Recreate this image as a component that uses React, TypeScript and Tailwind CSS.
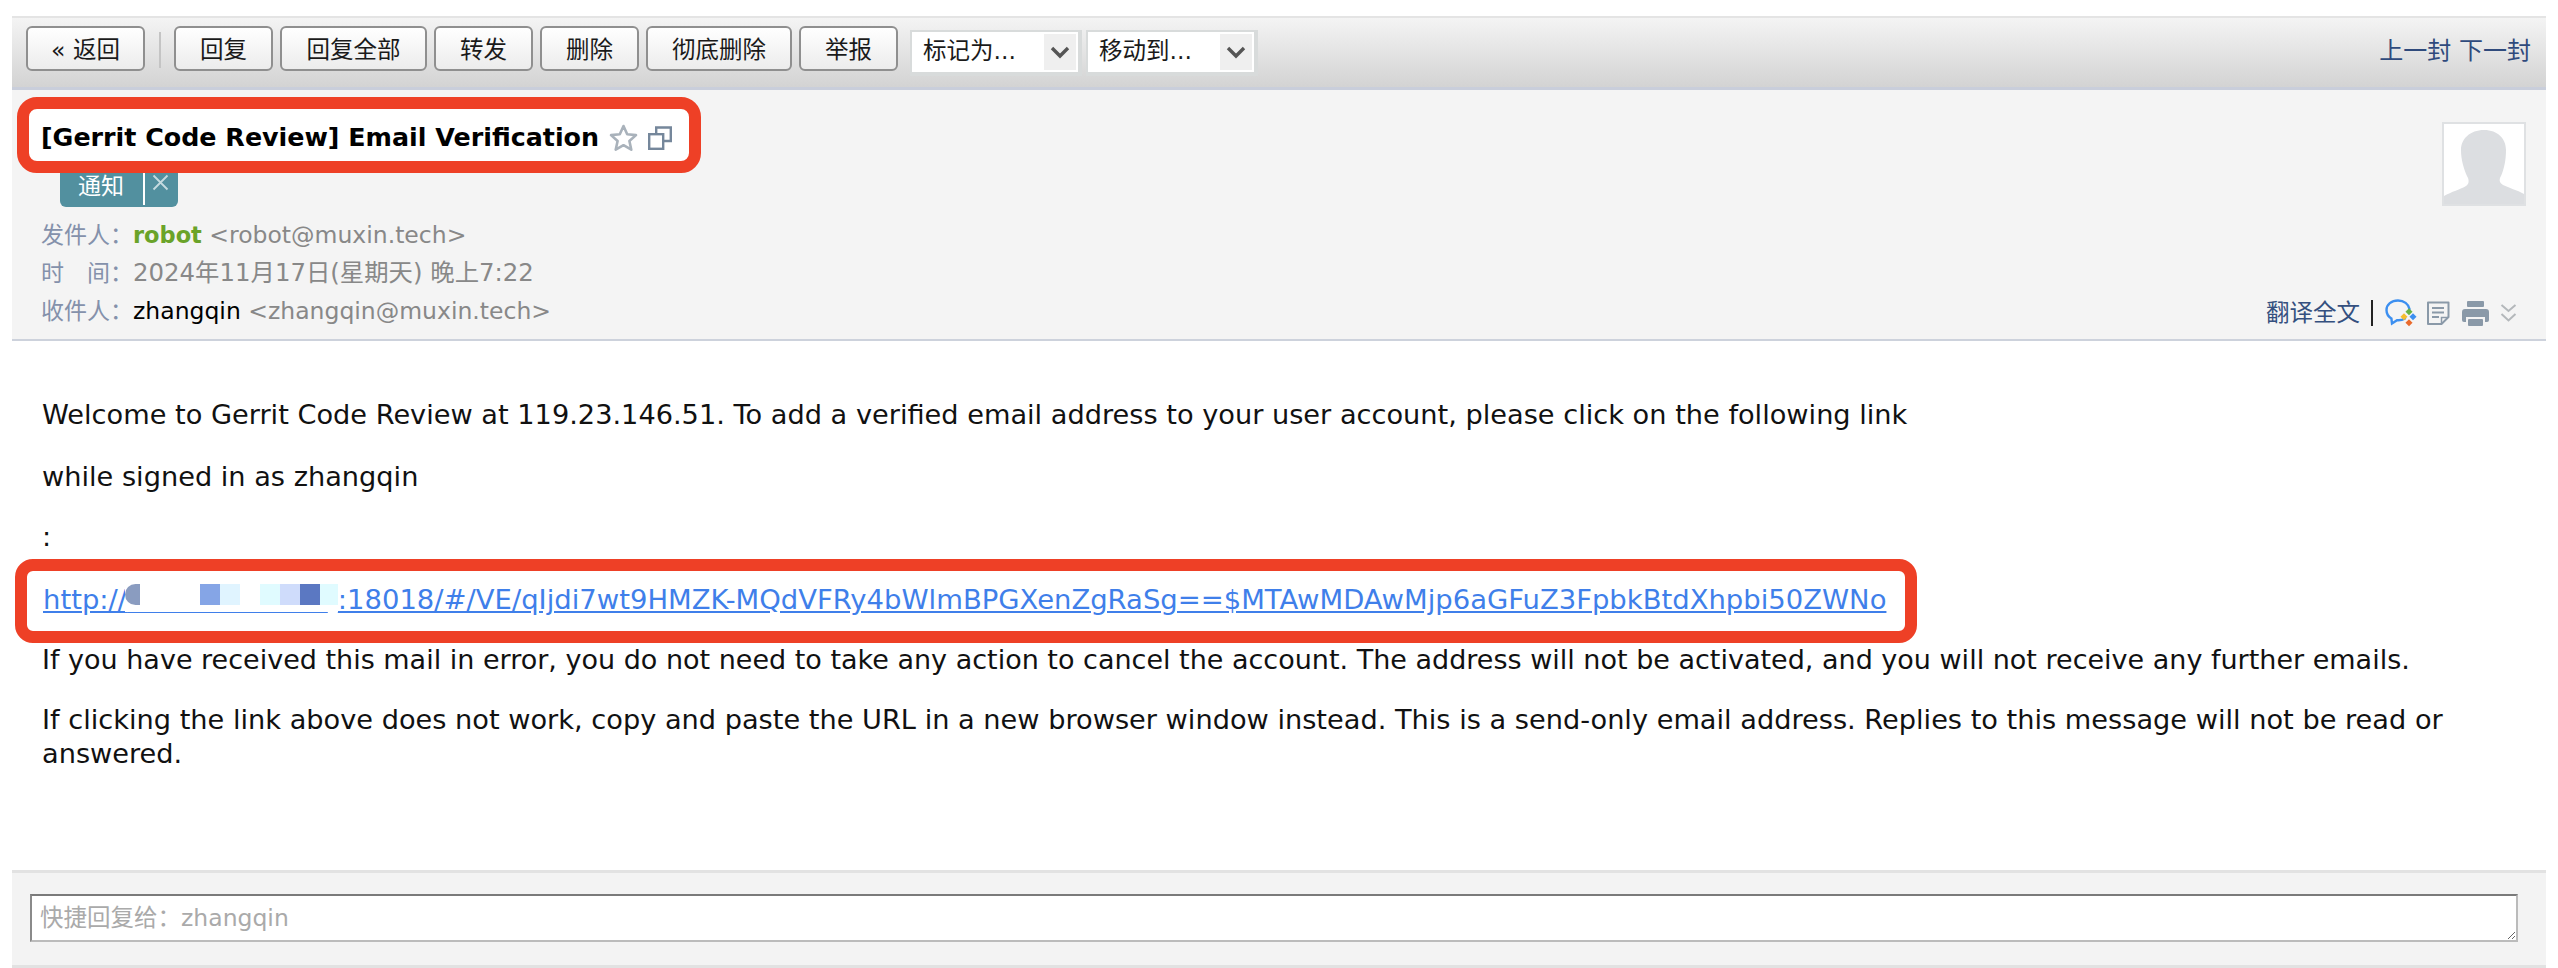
const cjk = "font-['DejaVu_Sans','Noto_Sans_CJK_SC',sans-serif]";

const buttons = [
  { label: "回复", width: "w-[99px]" },
  { label: "回复全部", width: "w-[147px]" },
  { label: "转发", width: "w-[99px]" },
  { label: "删除", width: "w-[99px]" },
  { label: "彻底删除", width: "w-[146px]" },
  { label: "举报", width: "w-[99px]" },
];

function ToolButton({ label, width }: { label: string; width: string }) {
  return (
    <button
      type="button"
      className={`${width} h-[45px] shrink-0 rounded-[6px] border-2 border-[#8f8f8f] bg-gradient-to-b from-white to-[#ececec] pt-[5px] text-[23.500px] text-[#1a1a1a]`}
    >
      {label}
    </button>
  );
}

function SelectBox({ label }: { label: string }) {
  return (
    <div className="flex h-[46px] w-[172px] shrink-0 items-center border-t-2 border-r-4 border-b-4 border-l-2 border-[#d8dbdb] bg-white pr-[2px] pl-[11px]">
      <span className="flex-1 text-[23.500px] text-[#1a1a1a]">{label}</span>
      <span className="flex h-[36px] w-[32px] items-center justify-center bg-[#efefef]">
        <svg width="20" height="14" viewBox="0 0 20 14" fill="none">
          <path d="M2 3l8 8 8-8" stroke="#555" strokeWidth="3.4" />
        </svg>
      </span>
    </div>
  );
}

function StarIcon() {
  return (
    <svg width="29" height="28" viewBox="0 0 29 28" fill="none">
      <path
        d="M14.5 2l3.7 8.2 8.8.9-6.6 5.9 1.9 8.7-7.8-4.5-7.8 4.5 1.9-8.7L2 11.100l8.800-.9z"
        stroke="#a9b2bb"
        strokeWidth="2.600"
        strokeLinejoin="round"
      />
    </svg>
  );
}

function WindowIcon() {
  return (
    <svg width="24" height="24" viewBox="0 0 24 24" fill="none" stroke="#75879b" strokeWidth="2.400">
      <rect x="1.200" y="8.200" width="14" height="14.600" />
      <path d="M8.200 8V1.500h14.600v13.500h-7.500" />
    </svg>
  );
}

function AvatarBox() {
  return (
    <div className="h-[84px] w-[84px] border-2 border-[#dfe1e3] bg-white">
      <svg width="80" height="80" viewBox="0 0 80 80">
        <path
          d="M40 6c14 0 22 9 22 20 0 10-2 20-6 28-1 3 0 5 3 7 6 3 14 5 21 9v10H0V72c7-4 17-7 22-10 3-2 3-5 2-8-4-8-7-18-7-28C17 15 26 6 40 6z"
          fill="#dcdee1"
        />
      </svg>
    </div>
  );
}

function ChatIcon() {
  return (
    <svg width="32" height="28" viewBox="0 0 32 28" fill="none">
      <path
        d="M20 19.500c-2.500 1.500-5 2-8 1.700L7 24.500l-.6-5C3 17.500 1.500 14.500 1.500 11 1.500 5.500 6.500 1.500 13 1.500c6 0 10.500 3.500 11.500 8.500"
        stroke="#3c8ff0"
        strokeWidth="2.400"
        strokeLinecap="round"
      />
      <rect x="22" y="10" width="5" height="5" transform="rotate(45 24 12)" fill="#67b346" />
      <rect x="26" y="15" width="5" height="5" transform="rotate(45 28 17)" fill="#3c8ff0" />
      <rect x="17" y="15" width="5" height="5" transform="rotate(45 19 17)" fill="#f5bd2f" />
      <rect x="22" y="21" width="5" height="5" transform="rotate(45 24 23)" fill="#ea6a2c" />
    </svg>
  );
}

function NoteIcon() {
  return (
    <svg width="24" height="24" viewBox="0 0 24 24" fill="none" stroke="#8a99a8" strokeWidth="2">
      <path d="M2 1.500h20.500V16l-7 7H2z" strokeLinejoin="round" />
      <path d="M6 7h12M6 11.500h12M6 16h7" strokeWidth="1.800" />
      <path d="M22 16.500h-6.500V23" strokeWidth="1.500" />
    </svg>
  );
}

function PrintIcon() {
  return (
    <svg width="27" height="25" viewBox="0 0 27 25" fill="#8a99a8">
      <rect x="5" y="0" width="17" height="6" rx="1" />
      <path d="M3 8h21a3 3 0 013 3v8a2 2 0 01-2 2h-2v-5H4v5H2a2 2 0 01-2-2v-8a3 3 0 013-3z" />
      <rect x="6" y="18" width="15" height="7" rx="1" />
    </svg>
  );
}

function DoubleChevron() {
  return (
    <svg width="17" height="20" viewBox="0 0 17 20" fill="none" stroke="#b4b8bb" strokeWidth="2">
      <path d="M1.500 2l7 6 7-6M1.500 11l7 6.500 7-6.500" />
    </svg>
  );
}

export default function App() {
  return (
    <div className={`flex h-[968px] w-[2558px] flex-col overflow-hidden bg-white pt-4 pr-3 pl-3 ${cjk}`}>
      {/* toolbar */}
      <div className="flex h-[74px] shrink-0 items-start border-t-2 border-b-[3px] border-t-[#e4e4e4] border-b-[#c9cedb] bg-gradient-to-b from-[#f4f4f4] to-[#d3d3d3] pt-2 pl-[14px]">
        <ToolButton label="« 返回" width="w-[119px]" />
        <span className="mt-[6px] mr-[13px] ml-[14px] h-[36px] w-[2px] bg-[#c4c4c4]" />
        <div className="flex gap-[7px]">
          {buttons.map((b) => (
            <ToolButton key={b.label} label={b.label} width={b.width} />
          ))}
        </div>
        <div className="mt-[4px] ml-[12px] flex gap-[4px]">
          <SelectBox label="标记为..." />
          <SelectBox label="移动到..." />
        </div>
        <span className="mt-[7px] mr-[15px] ml-auto text-[24px] text-[#2f4a7c]">上一封 下一封</span>
      </div>

      {/* mail header */}
      <div className="flex h-[251px] shrink-0 justify-between border-b-2 border-[#cdd2dc] bg-[#f4f4f4] pt-[7px]">
        <div>
          <div className="ml-[5px] flex h-[76px] w-[684px] items-center gap-[10px] rounded-[20px] border-[12px] border-[#ee4026] bg-white pt-[5px] pl-3">
            <span className="text-[25.350px] font-bold text-black">[Gerrit Code Review] Email Verification</span>
            <StarIcon />
            <WindowIcon />
          </div>
          <div className="ml-[48px] flex h-[34px] w-[118px] items-start rounded-b-[6px] bg-[#52909f]">
            <span className="w-[83px] pl-[18px] text-[23px] leading-[26px] text-white">通知</span>
            <span className="h-[32px] w-[2px] bg-white" />
            <svg className="mt-[1px] ml-[7px]" width="17" height="17" viewBox="0 0 17 17" stroke="#c5dbe0" strokeWidth="1.800">
              <path d="M1.500 1.500l14 14M15.500 1.500l-14 14" />
            </svg>
          </div>
          <div className="mt-[11px] flex flex-col gap-[4px] pl-[29px] text-[23.500px] leading-[34px] text-[#888]">
            <div>
              <span className="text-[23px] text-[#8491ab]">发件人：</span>
              <span className="text-[22.500px] font-bold text-[#6aa329]">robot</span> &lt;robot@muxin.tech&gt;
            </div>
            <div className="text-[24.400px]">
              <span className="text-[23px] text-[#8491ab]">时　间：</span>2024年11月17日(星期天) 晚上7:22
            </div>
            <div>
              <span className="text-[23px] text-[#8491ab]">收件人：</span>
              <span className="text-black">zhangqin</span> &lt;zhangqin@muxin.tech&gt;
            </div>
          </div>
        </div>
        <div className="flex flex-col items-end justify-between pr-[20px] pb-[8px]">
          <div className="mt-[25px]">
            <AvatarBox />
          </div>
          <div className="mr-[9px] flex items-center">
            <span className="text-[23.500px] text-[#34507f]">翻译全文</span>
            <span className="mr-[12px] ml-[11px] h-[26px] w-[2px] bg-[#222]" />
            <ChatIcon />
            <span className="ml-[9px]"><NoteIcon /></span>
            <span className="ml-[12px]"><PrintIcon /></span>
            <span className="ml-[11px]"><DoubleChevron /></span>
          </div>
        </div>
      </div>

      {/* mail body */}
      <div className="pt-[57px] pl-[30px] text-[27.200px] leading-[34px] text-[#111]">
        <p>Welcome to Gerrit Code Review at 119.23.146.51. To add a verified email address to your user account, please click on the following link</p>
        <p className="mt-[28px]">while signed in as zhangqin</p>
        <p className="mt-[26px]">:</p>
        <div className="mt-[5px] -ml-[27px] w-fit rounded-[18px] border-[12px] border-[#ee4026] bg-white pt-[12px] pr-[19px] pb-[14px] pl-[16px] text-[27.450px]">
          <span className="relative block text-[#3f7fea] underline">
            http://<span className="mr-[10px]">119.23.146.51</span>:18018/#/VE/qIjdi7wt9HMZK-MQdVFRy4bWlmBPGXenZgRaSg==$MTAwMDAwMjp6aGFuZ3FpbkBtdXhpbi50ZWNo
            <span className="absolute top-[1px] left-[82px] flex h-[28px] w-[213px] bg-white">
              <span className="h-[21px] w-[15px] rounded-l-full bg-[#8a9cc0]" />
              <span className="ml-[60px] h-[21px] w-[20px] bg-[#85a5e6]" />
              <span className="h-[21px] w-[20px] bg-[#e0f4ff]" />
              <span className="ml-[20px] h-[21px] w-[20px] bg-[#e0fbff]" />
              <span className="h-[21px] w-[20px] bg-[#cfdcfb]" />
              <span className="h-[21px] w-[20px] bg-[#5b78c2]" />
              <span className="h-[21px] w-[18px] bg-[#e0fbff]" />
            </span>
          </span>
        </div>
        <p className="pr-[60px] text-[27px]">If you have received this mail in error, you do not need to take any action to cancel the account. The address will not be activated, and you will not receive any further emails.</p>
        <p className="mt-[26px] pr-[60px]">If clicking the link above does not work, copy and paste the URL in a new browser window instead. This is a send-only email address. Replies to this message will not be read or answered.</p>
      </div>

      {/* quick reply */}
      <div className="mt-auto h-[98px] shrink-0 border-t-[3px] border-b-[3px] border-[#e2e2e2] bg-[#f3f3f3] pt-[21px] pr-[28px] pl-[18px]">
        <textarea
          className="block h-[48px] w-full border-2 border-t-[#7a7a7a] border-r-[#bbb] border-b-[#bbb] border-l-[#8a8a8a] bg-white px-2 py-[8px] text-[23.500px] leading-[28px] outline-none placeholder:text-[#aaa]"
          placeholder="快捷回复给：zhangqin"
        />
      </div>
    </div>
  );
}
